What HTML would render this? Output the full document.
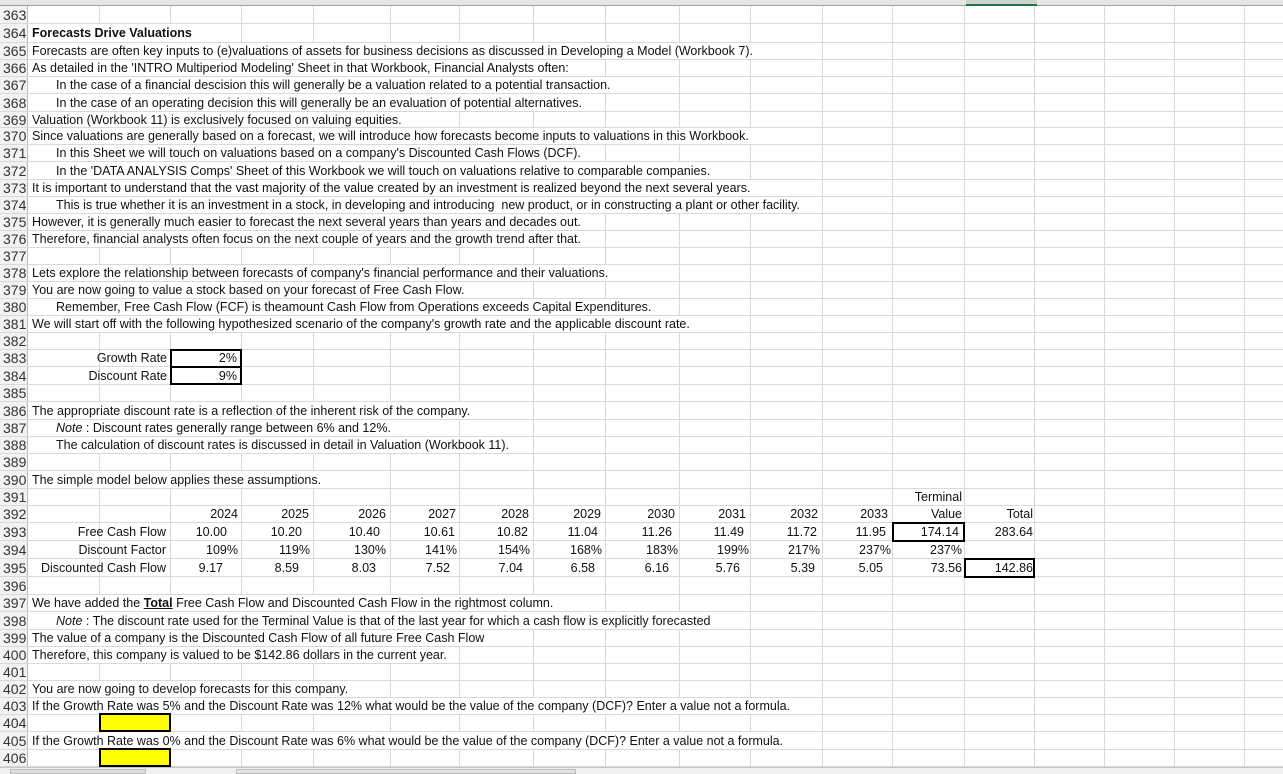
<!DOCTYPE html>
<html><head><meta charset="utf-8"><style>
body{margin:0;width:1283px;height:774px;overflow:hidden;background:#fff;position:relative;font-family:"Liberation Sans",sans-serif;font-size:12.5px;color:#111}
.v{position:absolute;top:6px;height:761px;width:1px;background:#d9d9d9}
.r{position:absolute;left:0;width:1283px;border-bottom:1px solid #d9d9d9;box-sizing:border-box}
.n{position:absolute;left:0;top:0;width:28px;height:100%;background:#f2f2f2;border-right:1px solid #bdbdbd;font-size:14px;color:#333;padding-left:3px;box-sizing:border-box;display:flex;align-items:center}
.t{position:absolute;top:0;height:100%;display:flex;align-items:center;white-space:nowrap;background:#fff;padding-right:2px}
.rt{justify-content:flex-end;background:transparent}
.box{position:absolute;border:2px solid #000;box-sizing:border-box}
.hdr{position:absolute;left:0;top:0;width:1283px;height:6px;background:#e6e6e6;border-bottom:1px solid #9e9e9e;box-sizing:border-box}
</style></head><body>
<div class="hdr"></div>
<div style="position:absolute;left:966px;top:0;width:71px;height:6px;background:#d0d0d0;border-bottom:2px solid #217346;box-sizing:border-box"></div>
<div class="v" style="left:99px"></div><div class="v" style="left:170px"></div><div class="v" style="left:241px"></div><div class="v" style="left:313px"></div><div class="v" style="left:390px"></div><div class="v" style="left:459px"></div><div class="v" style="left:533px"></div><div class="v" style="left:605px"></div><div class="v" style="left:679px"></div><div class="v" style="left:750px"></div><div class="v" style="left:822px"></div><div class="v" style="left:892px"></div><div class="v" style="left:964px"></div><div class="v" style="left:1034px"></div><div class="v" style="left:1104px"></div><div class="v" style="left:1174px"></div><div class="v" style="left:1244px"></div>

<div class="r" style="top:6px;height:18px"><div class="n">363</div></div>
<div class="r" style="top:24px;height:19px"><div class="n">364</div><div class="t" style="left:32px;font-weight:bold">Forecasts Drive Valuations</div></div>
<div class="r" style="top:43px;height:17px"><div class="n">365</div><div class="t" style="left:32px">Forecasts are often key inputs to (e)valuations of assets for business decisions as discussed in Developing a Model (Workbook 7).</div></div>
<div class="r" style="top:60px;height:17px"><div class="n">366</div><div class="t" style="left:32px">As detailed in the 'INTRO Multiperiod Modeling' Sheet in that Workbook, Financial Analysts often:</div></div>
<div class="r" style="top:77px;height:17px"><div class="n">367</div><div class="t" style="left:29px;padding-left:27px">In the case of a financial descision this will generally be a valuation related to a potential transaction.</div></div>
<div class="r" style="top:94px;height:18px"><div class="n">368</div><div class="t" style="left:29px;padding-left:27px">In the case of an operating decision this will generally be an evaluation of potential alternatives.</div></div>
<div class="r" style="top:112px;height:16px"><div class="n">369</div><div class="t" style="left:32px">Valuation (Workbook 11) is exclusively focused on valuing equities.</div></div>
<div class="r" style="top:128px;height:17px"><div class="n">370</div><div class="t" style="left:32px">Since valuations are generally based on a forecast, we will introduce how forecasts become inputs to valuations in this Workbook.</div></div>
<div class="r" style="top:145px;height:17px"><div class="n">371</div><div class="t" style="left:29px;padding-left:27px">In this Sheet we will touch on valuations based on a company's Discounted Cash Flows (DCF).</div></div>
<div class="r" style="top:162px;height:18px"><div class="n">372</div><div class="t" style="left:29px;padding-left:27px">In the 'DATA ANALYSIS Comps' Sheet of this Workbook we will touch on valuations relative to comparable companies.</div></div>
<div class="r" style="top:180px;height:17px"><div class="n">373</div><div class="t" style="left:32px">It is important to understand that the vast majority of the value created by an investment is realized beyond the next several years.</div></div>
<div class="r" style="top:197px;height:17px"><div class="n">374</div><div class="t" style="left:29px;padding-left:27px">This is true whether it is an investment in a stock, in developing and introducing &nbsp;new product, or in constructing a plant or other facility.</div></div>
<div class="r" style="top:214px;height:17px"><div class="n">375</div><div class="t" style="left:32px">However, it is generally much easier to forecast the next several years than years and decades out.</div></div>
<div class="r" style="top:231px;height:17px"><div class="n">376</div><div class="t" style="left:32px">Therefore, financial analysts often focus on the next couple of years and the growth trend after that.</div></div>
<div class="r" style="top:248px;height:17px"><div class="n">377</div></div>
<div class="r" style="top:265px;height:17px"><div class="n">378</div><div class="t" style="left:32px">Lets explore the relationship between forecasts of company's financial performance and their valuations.</div></div>
<div class="r" style="top:282px;height:17px"><div class="n">379</div><div class="t" style="left:32px">You are now going to value a stock based on your forecast of Free Cash Flow.</div></div>
<div class="r" style="top:299px;height:17px"><div class="n">380</div><div class="t" style="left:29px;padding-left:27px">Remember, Free Cash Flow (FCF) is theamount Cash Flow from Operations exceeds Capital Expenditures.</div></div>
<div class="r" style="top:316px;height:17px"><div class="n">381</div><div class="t" style="left:32px">We will start off with the following hypothesized scenario of the company's growth rate and the applicable discount rate.</div></div>
<div class="r" style="top:333px;height:17px"><div class="n">382</div></div>
<div class="r" style="top:350px;height:17px"><div class="n">383</div><div class="t rt" style="left:90px;width:77px">Growth Rate</div><div class="t rt" style="left:171px;width:66px">2%</div></div>
<div class="r" style="top:367px;height:18px"><div class="n">384</div><div class="t rt" style="left:70px;width:97px">Discount Rate</div><div class="t rt" style="left:171px;width:66px">9%</div></div>
<div class="r" style="top:385px;height:17px"><div class="n">385</div></div>
<div class="r" style="top:402px;height:18px"><div class="n">386</div><div class="t" style="left:32px">The appropriate discount rate is a reflection of the inherent risk of the company.</div></div>
<div class="r" style="top:420px;height:17px"><div class="n">387</div><div class="t" style="left:29px;padding-left:27px"><i>Note</i>&nbsp;: Discount rates generally range between 6% and 12%.</div></div>
<div class="r" style="top:437px;height:17px"><div class="n">388</div><div class="t" style="left:29px;padding-left:27px">The calculation of discount rates is discussed in detail in Valuation (Workbook 11).</div></div>
<div class="r" style="top:454px;height:17px"><div class="n">389</div></div>
<div class="r" style="top:471px;height:18px"><div class="n">390</div><div class="t" style="left:32px">The simple model below applies these assumptions.</div></div>
<div class="r" style="top:489px;height:17px"><div class="n">391</div><div class="t rt" style="left:893px;width:69px">Terminal</div></div>
<div class="r" style="top:506px;height:17px"><div class="n">392</div>
<div class="t rt" style="left:171px;width:67px">2024</div><div class="t rt" style="left:242px;width:67px">2025</div><div class="t rt" style="left:314px;width:72px">2026</div><div class="t rt" style="left:391px;width:65px">2027</div><div class="t rt" style="left:460px;width:69px">2028</div><div class="t rt" style="left:534px;width:67px">2029</div><div class="t rt" style="left:606px;width:69px">2030</div><div class="t rt" style="left:680px;width:66px">2031</div><div class="t rt" style="left:751px;width:67px">2032</div><div class="t rt" style="left:823px;width:65px">2033</div><div class="t rt" style="left:893px;width:69px">Value</div><div class="t rt" style="left:965px;width:68px">Total</div></div>
<div class="r" style="top:523px;height:18px"><div class="n">393</div><div class="t rt" style="left:29px;width:137px">Free Cash Flow</div>
<div class="t rt" style="left:171px;width:56px">10.00</div><div class="t rt" style="left:242px;width:60px">10.20</div><div class="t rt" style="left:314px;width:66px">10.40</div><div class="t rt" style="left:391px;width:64px">10.61</div><div class="t rt" style="left:460px;width:68px">10.82</div><div class="t rt" style="left:534px;width:64px">11.04</div><div class="t rt" style="left:606px;width:66px">11.26</div><div class="t rt" style="left:680px;width:64px">11.49</div><div class="t rt" style="left:751px;width:66px">11.72</div><div class="t rt" style="left:823px;width:63px">11.95</div><div class="t rt" style="left:893px;width:66px">174.14</div><div class="t rt" style="left:965px;width:68px">283.64</div></div>
<div class="r" style="top:541px;height:18px"><div class="n">394</div><div class="t rt" style="left:29px;width:137px">Discount Factor</div>
<div class="t rt" style="left:171px;width:67px">109%</div><div class="t rt" style="left:242px;width:68px">119%</div><div class="t rt" style="left:314px;width:72px">130%</div><div class="t rt" style="left:391px;width:66px">141%</div><div class="t rt" style="left:460px;width:70px">154%</div><div class="t rt" style="left:534px;width:68px">168%</div><div class="t rt" style="left:606px;width:72px">183%</div><div class="t rt" style="left:680px;width:69px">199%</div><div class="t rt" style="left:751px;width:69px">217%</div><div class="t rt" style="left:823px;width:68px">237%</div><div class="t rt" style="left:893px;width:69px">237%</div></div>
<div class="r" style="top:559px;height:18px"><div class="n">395</div><div class="t rt" style="left:29px;width:137px">Discounted Cash Flow</div>
<div class="t rt" style="left:171px;width:52px">9.17</div><div class="t rt" style="left:242px;width:57px">8.59</div><div class="t rt" style="left:314px;width:62px">8.03</div><div class="t rt" style="left:391px;width:59px">7.52</div><div class="t rt" style="left:460px;width:63px">7.04</div><div class="t rt" style="left:534px;width:61px">6.58</div><div class="t rt" style="left:606px;width:63px">6.16</div><div class="t rt" style="left:680px;width:60px">5.76</div><div class="t rt" style="left:751px;width:64px">5.39</div><div class="t rt" style="left:823px;width:60px">5.05</div><div class="t rt" style="left:893px;width:69px">73.56</div><div class="t rt" style="left:965px;width:68px">142.86</div></div>
<div class="r" style="top:577px;height:18px"><div class="n">396</div></div>
<div class="r" style="top:595px;height:17px"><div class="n">397</div><div class="t" style="left:32px">We have added the&nbsp;<b><u>Total</u></b>&nbsp;Free Cash Flow and Discounted Cash Flow in the rightmost column.</div></div>
<div class="r" style="top:612px;height:18px"><div class="n">398</div><div class="t" style="left:29px;padding-left:27px"><i>Note</i>&nbsp;: The discount rate used for the Terminal Value is that of the last year for which a cash flow is explicitly forecasted</div></div>
<div class="r" style="top:630px;height:17px"><div class="n">399</div><div class="t" style="left:32px">The value of a company is the Discounted Cash Flow of all future Free Cash Flow</div></div>
<div class="r" style="top:647px;height:17px"><div class="n">400</div><div class="t" style="left:32px">Therefore, this company is valued to be $142.86 dollars in the current year.</div></div>
<div class="r" style="top:664px;height:17px"><div class="n">401</div></div>
<div class="r" style="top:681px;height:17px"><div class="n">402</div><div class="t" style="left:32px">You are now going to develop forecasts for this company.</div></div>
<div class="r" style="top:698px;height:17px"><div class="n">403</div><div class="t" style="left:32px">If the Growth Rate was 5% and the Discount Rate was 12% what would be the value of the company (DCF)? Enter a value not a formula.</div></div>
<div class="r" style="top:715px;height:17px"><div class="n">404</div></div>
<div class="r" style="top:732px;height:18px"><div class="n">405</div><div class="t" style="left:32px">If the Growth Rate was 0% and the Discount Rate was 6% what would be the value of the company (DCF)? Enter a value not a formula.</div></div>
<div class="r" style="top:750px;height:17px"><div class="n">406</div></div>

<div class="box" style="left:170px;top:349px;width:72px;height:19px"></div>
<div class="box" style="left:170px;top:366px;width:72px;height:19px"></div>
<div class="box" style="left:892px;top:522px;width:73px;height:20px"></div>
<div class="box" style="left:964px;top:558px;width:71px;height:20px"></div>
<div class="box" style="left:99px;top:713px;width:72px;height:19px;background:#ffff00"></div>
<div class="box" style="left:99px;top:748px;width:72px;height:19px;background:#ffff00"></div>

<div style="position:absolute;left:0;top:767px;width:1283px;height:7px;background:#f0f0f0;border-top:1px solid #c6c6c6;box-sizing:border-box"></div>
<div style="position:absolute;left:10px;top:769px;width:136px;height:5px;background:#dcdcdc;border:1px solid #bcbcbc;box-sizing:border-box"></div>
<div style="position:absolute;left:236px;top:769px;width:340px;height:5px;background:#e4e4e4;border:1px solid #bcbcbc;box-sizing:border-box"></div>
</body></html>
